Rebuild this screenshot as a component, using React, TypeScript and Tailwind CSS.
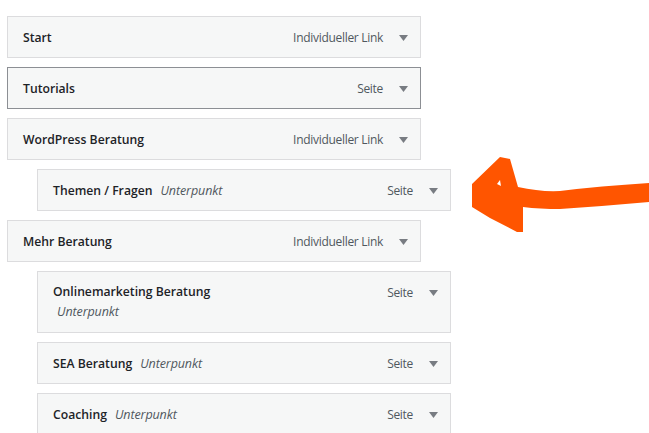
import React from "react";

type Item = { title: string; type: string; sub?: boolean; active?: boolean; wrap?: boolean };

const items: Item[] = [
  { title: "Start", type: "Individueller Link" },
  { title: "Tutorials", type: "Seite", active: true },
  { title: "WordPress Beratung", type: "Individueller Link" },
  { title: "Themen / Fragen", type: "Seite", sub: true },
  { title: "Mehr Beratung", type: "Individueller Link" },
  { title: "Onlinemarketing Beratung", type: "Seite", sub: true, wrap: true },
  { title: "SEA Beratung", type: "Seite", sub: true },
  { title: "Coaching", type: "Seite", sub: true },
];

function Arrow() {
  return (
    <svg width="9" height="6" viewBox="0 0 9 6" className="shrink-0">
      <path d="M0 0 L9 0 L4.5 6 Z" fill="#787c82" />
    </svg>
  );
}

function Row({ it }: { it: Item }) {
  const border = it.active ? "border-[#8c8f94]" : "border-[#dcdcde]";
  return (
    <div
      className={`${it.sub ? "ml-[30px]" : ""} w-[414px] border ${border} bg-[#f6f7f7] ${
        it.wrap ? "h-[62px] items-start pt-[10px]" : "h-[42px] items-center pt-[2px]"
      } flex pl-[15px] pr-[12px]`}
    >
      <div className="flex-1 min-w-0">
        {it.wrap ? (
          <div className="flex flex-col">
            <span className="font-semibold text-[#1d2327] leading-[20px] text-[12.2px]">{it.title}</span>
            <span className="italic text-[#50575e] leading-[20px] pl-[4px] text-[12.5px] tracking-[-0.1px]">Unterpunkt</span>
          </div>
        ) : (
          <div className="flex items-baseline">
            <span className="font-semibold text-[#1d2327] text-[12.2px]">{it.title}</span>
            {it.sub && (
              <span className="italic text-[#50575e] ml-[8px] text-[12.5px] tracking-[-0.1px]">Unterpunkt</span>
            )}
          </div>
        )}
      </div>
      <div className={`flex items-center ${it.wrap ? "h-[22px]" : ""}`}>
        <span className="text-[#50575e] text-[12px] tracking-[-0.3px]">{it.type}</span>
        <span className="ml-[16px]">
          <Arrow />
        </span>
      </div>
    </div>
  );
}

export default function App() {
  return (
    <div
      className="relative w-[649px] h-[433px] overflow-hidden bg-white"
      style={{ fontFamily: '"Open Sans", "Noto Sans", sans-serif' }}
    >
      <div className="flex flex-col gap-[9px] pt-[16px] pl-[7px]">
        {items.map((it, i) => (
          <Row key={i} it={it} />
        ))}
      </div>
      <svg className="absolute left-0 top-0" width="649" height="433" viewBox="0 0 649 433">
        <path
          d="M500 157 L510 159 L518 187 Q540 192 560 191 Q600 186 649 183 L649 202 Q605 206 560 209 Q540 209 523 207 L523 232 L517 232 L490 218 L472 207 L472 184 Z"
          fill="#ff5500"
        />
        <path d="M497 184 L500 180 L501 186 Z" fill="#ffffff" />
      </svg>
    </div>
  );
}
